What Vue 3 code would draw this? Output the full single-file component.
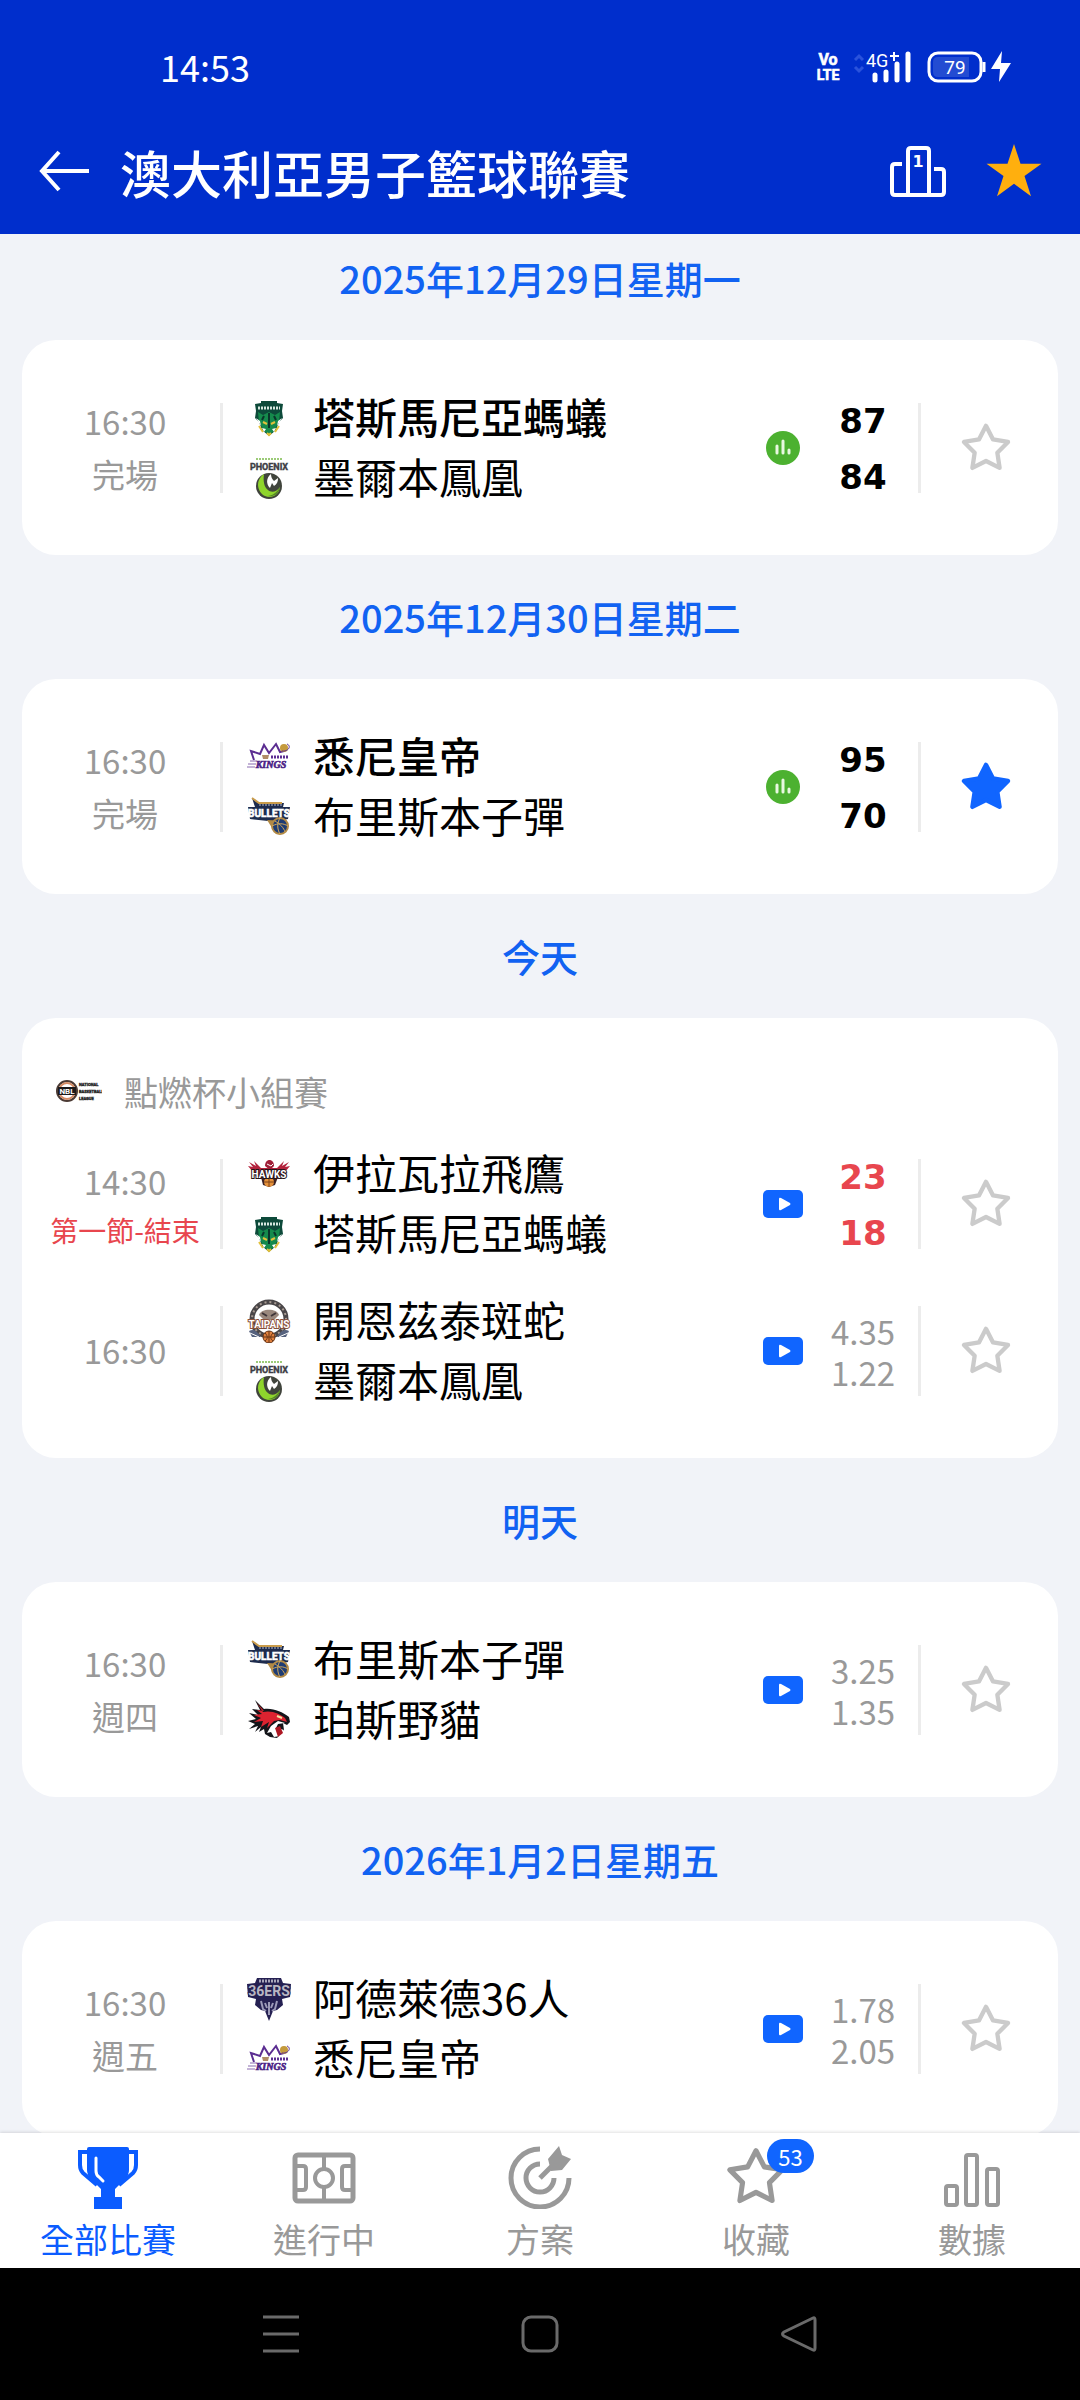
<template>
  <div class="app">
    <svg class="sprites" aria-hidden="true">
      <symbol id="logo-jackjumpers" viewBox="0 0 44 44">
        <path d="M8 8l6-1V5h16v2l6 1-1 7 1 7-4 4-3 8-7 6-7-6-3-8-4-4 1-7z" fill="#0d4a3a" />
        <path d="M11 16l5 3 6-3 6 3 5-3-1 10-5 9-5 4-5-4-5-9z" fill="#158a4c" />
        <path d="M11 12h22" stroke="#d6e8df" stroke-width="3" stroke-dasharray="2 1" />
        <path d="M9 22l4 3 1 5zM35 22l-4 3-1 5zM19 33l-2 3-2-4zM25 33l2 3 2-4z" fill="#fff" />
        <path d="M16 26l4 2M28 26l-4 2M12 30l4 6M32 30l-4 6M20 37l2 2 2-2" stroke="#e3c13b" stroke-width="2" fill="none" />
        <path d="M22 17v15M17 20l-2 4M27 20l2 4" stroke="#0a352b" stroke-width="2" />
      </symbol>
      <symbol id="logo-phoenix" viewBox="0 0 44 44">
        <path d="M9 3h26" stroke="#9ccb78" stroke-width="2" stroke-dasharray="2 1" />
        <text x="22" y="14" font-size="9" font-weight="700" font-family="Roboto, sans-serif" text-anchor="middle" fill="#3c3c44" stroke="#3c3c44" stroke-width="0.4">PHOENIX</text>
        <circle cx="22" cy="30" r="13" fill="#40443c" />
        <path d="M17 18c-9 6-7 18 1 22 7 3 14-1 15-9-3 5-9 6-12 3-4-3-5-9-4-16z" fill="#8fd52c" />
        <path d="M24 18c-5 4-5 10-1 14l2-5 2 3c3-2 4-4 4-8l-4 3c-2-2-3-4-3-7z" fill="#fff" />
        <path d="M33 31c-1 7-6 10-12 9 6-1 9-4 12-9z" fill="#55842a" />
      </symbol>
      <symbol id="logo-kings" viewBox="0 0 44 44">
        <path d="M7 25L4 16l9 3 4-9 5 8 7-9 4 8 4-1" fill="none" stroke="#5b2d91" stroke-width="2" />
        <circle cx="37" cy="13" r="4" fill="#c49a3c" />
        <path d="M35 16c6 1 10-5 5-7" fill="none" stroke="#5b2d91" />
        <path d="M15 20h7l-1 4h-5z" fill="#b08c66" />
        <path d="M24 22h17" stroke="#5b2d91" stroke-width="3" stroke-dasharray="2 1" />
        <path d="M3 26h7M1 29h8M0 32h8" stroke="#8a6ab0" />
        <text x="24" y="33" font-size="10" font-weight="700" font-family="'Liberation Serif', serif" font-style="italic" text-anchor="middle" fill="#4b1f86" stroke="#4b1f86" stroke-width="0.6">KINGS</text>
      </symbol>
      <symbol id="logo-bullets" viewBox="0 0 44 44">
        <path d="M5 3l7 5h25l-1 4h7l-2 12-10 2H21L3 24 1 12h7z" fill="#1d2b4d" />
        <path d="M5 3l7 5h23" stroke="#c99b4a" stroke-width="2" fill="none" />
        <path d="M12 10h24" stroke="#68728c" stroke-width="2" stroke-dasharray="2 1" />
        <path d="M20 25l9 14 10-13z" fill="#b28a45" />
        <circle cx="33" cy="31" r="8" fill="#1e3c73" stroke="#b28a45" stroke-width="2" />
        <path d="M25 31c6-3 11-3 16 0M33 23c-3 5-3 11 0 16M28 26c5 3 9 7 10 11" stroke="#d0a75b" fill="none" />
        <text x="22" y="22" font-size="10" font-weight="700" font-family="Roboto, sans-serif" text-anchor="middle" fill="#fff" stroke="#fff" stroke-width="0.6">BULLETS</text>
      </symbol>
      <symbol id="logo-hawks" viewBox="0 0 44 44">
        <path d="M1 14l5 1-4-5 7 4-2-5 7 7h16l7-7-2 5 7-4-4 5 5-1-5 6-4 7H11l-5-7z" fill="#b3223c" />
        <path d="M18 14c0-8 9-8 9 0l-4 4z" fill="#a01f38" />
        <path d="M20 12l4 2 2-2" stroke="#fff" fill="none" />
        <path d="M14 25h17l-3 8-6 2-6-2z" fill="#3b2125" />
        <circle cx="22" cy="30" r="5" fill="#e5913b" />
        <path d="M17 30h10M22 25v10" stroke="#7e4318" />
        <text x="22" y="26" font-size="10" font-weight="700" font-family="Roboto, sans-serif" text-anchor="middle" fill="#fff" stroke="#241418" stroke-width="2" paint-order="stroke">HAWKS</text>
      </symbol>
      <symbol id="logo-taipans" viewBox="0 0 44 44">
        <circle cx="22" cy="20" r="17" fill="#fff" stroke="#4a4648" stroke-width="5" />
        <circle cx="22" cy="20" r="17" fill="none" stroke="#a79a92" stroke-width="2" stroke-dasharray="2 3" />
        <path d="M12 16c2-7 18-7 20 0l-5 5H17z" fill="#9a887d" />
        <path d="M15 14l5 3M29 14l-5 3" stroke="#3f3538" stroke-width="2" />
        <path d="M2 32c6-3 9 2 12 6H5zM42 32c-6-3-9 2-12 6h9z" fill="#56627e" />
        <path d="M3 34l9 4M41 34l-9 4" stroke="#fff" />
        <circle cx="22" cy="38" r="6" fill="#e0803d" stroke="#663417" />
        <path d="M16 38h12M22 32v12M18 34c3 3 3 6 0 8M26 34c-3 3-3 6 0 8" stroke="#663417" fill="none" />
        <text x="22" y="29" font-size="10" font-weight="700" font-family="Roboto, sans-serif" text-anchor="middle" fill="#fff" stroke="#8a523d" stroke-width="2" paint-order="stroke">TAIPANS</text>
      </symbol>
      <symbol id="logo-wildcats" viewBox="0 0 44 44">
        <path d="M8 2l9 9c10-1 18 3 25 8l1 5-3 3-4-2 1 7-7 8-7-1-5-3-1-5-5 3 2-5-6 5 3-6-9 3 6-5-7-3 8-2-7-6 9 2-6-6 8 1z" fill="#14151a" />
        <path d="M10 5l6 9c9-2 17 2 22 6l2 4-7-2-6 1-7 7 2-6-8 5 2-6-9 1 7-4-7-3 8-1-5-4 7 1z" fill="#dc2330" />
        <path d="M38 25l-7-2-7 5-4 7 4-1 3 5 6-1 4-6-3-1-2 2-3-3 2-4z" fill="#fff" />
        <path d="M28 30l5-2 3 7-5 4z" fill="#ad1723" />
        <path d="M30 18l5 2" stroke="#f4e5a2" stroke-width="2" />
      </symbol>
      <symbol id="logo-36ers" viewBox="0 0 44 44">
        <path d="M10 1h24l2 5 8 1-1 13-8 2 1 6-6 5-4 1-4 10-4-10-4-1-6-5 1-6-8-2L0 7l8-1z" fill="#252052" />
        <path d="M14 24l2 8 3 2M30 24l-2 8-3 2M22 25v13M18 26l2 5M26 26l-2 5" stroke="#9c9ab8" stroke-width="2" fill="none" />
        <path d="M12 4h20" stroke="#a9a7bb" stroke-width="3" stroke-dasharray="2 1" />
        <text x="22" y="19" font-size="14" font-weight="700" font-family="Roboto, sans-serif" text-anchor="middle" fill="#b9b6c2" stroke="#252052" stroke-width="2" paint-order="stroke">36ERS</text>
      </symbol>
      <symbol id="icon-star" viewBox="0 0 50 50">
        <path
          d="M25 4.5L31.5 17.1L45.4 19.4L35.5 29.4L37.6 43.4L25 37L12.4 43.4L14.5 29.4L4.6 19.4L18.5 17.1Z"
          stroke="currentColor"
          stroke-width="4"
          stroke-linejoin="round"
        />
      </symbol>
    </svg>

    <header class="top">
      <div class="status-bar">
        <span class="clock">14:53</span>
        <svg class="status-icons" viewBox="0 0 200 36" role="img" aria-label="VoLTE 4G+ 79%">
          <g font-family="Roboto, sans-serif" font-weight="700" fill="#fff" stroke="#fff" stroke-width="0.6">
            <text x="16" y="17" font-size="16" text-anchor="middle">Vo</text>
            <text x="16" y="32" font-size="14" text-anchor="middle">LTE</text>
          </g>
          <path d="M43 12l4-4 4 4M43 19l4 4 4-4" fill="none" stroke="#2a52dc" stroke-width="3" />
          <text x="54" y="19" font-size="18" font-family="Roboto, sans-serif" fill="#fff">4G</text>
          <path d="M78 8h9M82 4v9" stroke="#fff" stroke-width="2" />
          <path d="M63 27v5M74 24v8M85 16v16M96 6v26" stroke="#fff" stroke-width="5" stroke-linecap="round" />
          <rect x="117" y="5" width="52" height="28" rx="9" fill="none" stroke="#fff" stroke-width="3" />
          <path d="M126 9h31v20h-31q-5 0-5-5V14q0-5 5-5z" fill="#234cd2" />
          <path d="M172 14v10" stroke="#fff" stroke-width="3" />
          <text x="143" y="26" font-size="19" text-anchor="middle" font-family="Roboto, sans-serif" fill="#fff">79</text>
          <path d="M190 3l-11 18h9l-1 13 12-19h-10z" fill="#fff" />
        </svg>
      </div>
      <div class="title-bar">
        <button class="icon-button" type="button" aria-label="返回">
          <svg class="back" viewBox="0 0 52 44">
            <path d="M21 2L4 21l17 19M4 21h47" fill="none" stroke="#fff" stroke-width="4" />
          </svg>
        </button>
        <h1 class="title">澳大利亞男子籃球聯賽</h1>
        <button class="icon-button" type="button" aria-label="排名">
          <svg class="podium" viewBox="0 0 56 52">
            <path
              d="M12 18H5q-3 0-3 3v25q0 3 3 3h46q3 0 3-3V26q0-3-3-3h-7M18 49V5q0-3 3-3h15q3 0 3 3v44"
              fill="none"
              stroke="#fff"
              stroke-width="4"
            />
            <text x="28" y="21" font-size="16" font-weight="700" font-family="'DejaVu Sans', sans-serif" text-anchor="middle" fill="#fff">1</text>
          </svg>
        </button>
        <button class="icon-button" type="button" aria-label="收藏聯賽" aria-pressed="true">
          <svg class="gold-star" viewBox="0 0 56 56">
            <path
              d="M28 0L34.5 19.8H55.5L38.5 32L45 52.2L28 39.8L11 52.2L17.5 32L0.5 19.8H21.5Z"
              fill="#ffaf0e"
            />
          </svg>
        </button>
      </div>
    </header>

    <main class="schedule">
      <section v-for="day in days" :key="day.label" class="day">
        <h2 class="day-label">{{ day.label }}</h2>
        <div class="card">
          <div v-if="day.stage" class="stage">
            <svg class="league-logo" viewBox="0 0 46 24" aria-hidden="true">
              <circle cx="11" cy="12" r="10" fill="#fff" stroke="#4b3a34" stroke-width="2" />
              <circle cx="11" cy="12" r="8" fill="none" stroke="#d58b63" stroke-width="2" />
              <path d="M2 8h18v8H2z" fill="#1c1a1b" />
              <g font-family="Roboto, sans-serif" font-weight="700">
                <text x="11" y="15" font-size="8" text-anchor="middle" fill="#fff">NBL</text>
                <g font-size="4" fill="#2b2b2b" stroke="#2b2b2b" stroke-width="0.4">
                  <text x="23" y="7">NATIONAL</text>
                  <text x="23" y="14">BASKETBALL</text>
                  <text x="23" y="21">LEAGUE</text>
                </g>
              </g>
            </svg>
            <span>{{ day.stage }}</span>
          </div>
          <article v-for="match in day.matches" :key="match.id" class="match">
            <div class="when">
              <span>{{ match.time }}</span>
              <span v-if="match.note" :class="{ live: match.live }">{{ match.note }}</span>
            </div>
            <div class="teams">
              <div v-for="team in match.teams" :key="team.name" :class="['team', { winner: team.winner }]">
                <svg class="team-logo" aria-hidden="true"><use :href="`#logo-${team.logo}`" /></svg>
                <span class="team-name">{{ team.name }}</span>
              </div>
            </div>
            <svg v-if="match.finished" class="stats-icon" viewBox="0 0 34 34" role="img" aria-label="統計">
              <circle cx="17" cy="17" r="17" fill="#4cb130" />
              <path d="M11 15v7M17 10v12M23 19v3" stroke="#e8f8e0" stroke-width="3" stroke-linecap="round" />
            </svg>
            <svg v-else class="video-icon" viewBox="0 0 40 28" role="img" aria-label="直播">
              <rect width="40" height="28" rx="5" fill="#1065ff" />
              <path d="M16 9v10q0 2 2 1l9-5q1-1 0-2l-9-5q-2-1-2 1z" fill="#fff" />
            </svg>
            <div :class="['numbers', { score: match.scored, live: match.live }]">
              <span v-for="value in match.values" :key="value">{{ value }}</span>
            </div>
            <div class="favourite-cell">
              <button
                :class="['favourite', { active: match.favourite }]"
                type="button"
                aria-label="收藏"
                :aria-pressed="match.favourite"
                @click="match.favourite = !match.favourite"
              >
                <svg><use href="#icon-star" /></svg>
              </button>
            </div>
          </article>
        </div>
      </section>
    </main>

    <nav class="tabs">
      <button
        v-for="tab in tabs"
        :key="tab.id"
        :class="['tab', { current: tab.id === currentTab }]"
        type="button"
        @click="currentTab = tab.id"
      >
        <span class="tab-icon">
          <svg v-if="tab.id === 'all'" viewBox="0 0 64 64">
            <path d="M13 7H4v13q0 5 3 8l14 12M51 7h9v13q0 5-3 8L43 40" fill="none" stroke="currentColor" stroke-width="4" />
            <path d="M13 2h38q2 0 2 2v21q0 5-4 9l-10 10v8h7v12H18V52h7v-8L15 34q-4-4-4-9V4q0-2 2-2z" fill="currentColor" />
            <path d="M20 13v13q0 4 3 6l4 4" fill="none" stroke="#fff" stroke-width="3" stroke-linecap="round" />
          </svg>
          <svg v-else-if="tab.id === 'live'" viewBox="0 0 64 64" fill="none" stroke="currentColor" stroke-width="4">
            <rect x="3" y="10" width="58" height="46" rx="3" stroke-width="5" />
            <path d="M32 10v14M32 42v14M5 21h6q3 0 3 3v18q0 3-3 3H5M59 21h-6q-3 0-3 3v18q0 3 3 3h6" />
            <circle cx="32" cy="33" r="9" />
          </svg>
          <svg v-else-if="tab.id === 'plans'" viewBox="0 0 64 64" fill="none" stroke="currentColor" stroke-width="5">
            <path d="M32 4A29 29 0 1 0 61 33M32 19A14 14 0 1 0 46 33" />
            <path d="M32 33l15-15" />
            <path d="M40 14L51 1l3 9 9 4-9 11-11 1z" fill="currentColor" stroke="none" />
          </svg>
          <svg v-else-if="tab.id === 'favourites'" class="tab-star"><use href="#icon-star" /></svg>
          <svg v-else viewBox="0 0 64 64" fill="none" stroke="currentColor" stroke-width="4">
            <rect x="6" y="41" width="11" height="19" rx="2" />
            <rect x="26" y="10" width="11" height="50" rx="2" />
            <rect x="47" y="24" width="11" height="36" rx="2" />
          </svg>
          <span v-if="tab.badge" class="badge">{{ tab.badge }}</span>
        </span>
        <span>{{ tab.label }}</span>
      </button>
    </nav>

    <div class="system-nav">
      <button type="button" aria-label="最近">
        <svg viewBox="0 0 38 38"><path d="M1 2h36M1 19h36M1 36h36" /></svg>
      </button>
      <button type="button" aria-label="主頁">
        <svg viewBox="0 0 38 38"><rect x="2" y="2" width="34" height="34" rx="8" /></svg>
      </button>
      <button type="button" aria-label="上一頁">
        <svg viewBox="0 0 38 38"><path d="M33 3L4 17q-3 2 0 4l29 14q2 1 2-2V5q0-3-2-2z" /></svg>
      </button>
    </div>
  </div>
</template>

<script setup>
import { reactive, ref } from 'vue';

const TEAMS = {
  jackjumpers: '塔斯馬尼亞螞蟻',
  phoenix: '墨爾本鳳凰',
  kings: '悉尼皇帝',
  bullets: '布里斯本子彈',
  hawks: '伊拉瓦拉飛鷹',
  taipans: '開恩茲泰斑蛇',
  wildcats: '珀斯野貓',
  '36ers': '阿德萊德36人',
};

let nextId = 1;

function match(time, note, logos, values, extra = {}) {
  return {
    id: nextId++,
    time,
    note,
    teams: logos.map((logo) => ({
      logo,
      name: TEAMS[logo],
      winner: extra.winner === logo,
    })),
    values,
    finished: Boolean(extra.winner),
    scored: Boolean(extra.winner || extra.live),
    live: Boolean(extra.live),
    favourite: Boolean(extra.favourite),
  };
}

const days = reactive([
  {
    label: '2025年12月29日星期一',
    matches: [match('16:30', '完場', ['jackjumpers', 'phoenix'], ['87', '84'], { winner: 'jackjumpers' })],
  },
  {
    label: '2025年12月30日星期二',
    matches: [match('16:30', '完場', ['kings', 'bullets'], ['95', '70'], { winner: 'kings', favourite: true })],
  },
  {
    label: '今天',
    stage: '點燃杯小組賽',
    matches: [
      match('14:30', '第一節-結束', ['hawks', 'jackjumpers'], ['23', '18'], { live: true }),
      match('16:30', '', ['taipans', 'phoenix'], ['4.35', '1.22']),
    ],
  },
  {
    label: '明天',
    matches: [match('16:30', '週四', ['bullets', 'wildcats'], ['3.25', '1.35'])],
  },
  {
    label: '2026年1月2日星期五',
    matches: [match('16:30', '週五', ['36ers', 'kings'], ['1.78', '2.05'])],
  },
]);

const currentTab = ref('all');

const tabs = [
  { id: 'all', label: '全部比賽' },
  { id: 'live', label: '進行中' },
  { id: 'plans', label: '方案' },
  { id: 'favourites', label: '收藏', badge: 53 },
  { id: 'stats', label: '數據' },
];
</script>

<style>
body {
  margin: 0;
  background: #f1f3f8;
}
</style>

<style scoped>
.app {
  display: flex;
  flex-direction: column;
  height: 100vh;
  font-family: "Noto Sans CJK TC", sans-serif;
  color: #000;
  background: #f1f3f8;
}

svg {
  display: block;
}

.sprites {
  display: none;
}

button {
  padding: 0;
  border: 0;
  background: none;
  font: inherit;
  color: inherit;
  cursor: pointer;
}

/* header */
.top {
  flex-shrink: 0;
  color: #fff;
  background: #002ecc;
}

.status-bar {
  display: flex;
  align-items: center;
  justify-content: space-between;
  height: 92px;
  padding: 20px 68px 0 160px;
}

.clock {
  font-size: 36px;
  line-height: 40px;
}

.status-icons {
  width: 200px;
  height: 36px;
}

.title-bar {
  display: flex;
  align-items: center;
  height: 120px;
  padding: 0 38px 2px;
}

.title {
  flex: 1;
  margin: 0 0 0 30px;
  font-size: 51px;
  font-weight: 500;
  line-height: 60px;
}

.back {
  width: 52px;
  height: 44px;
}

.podium {
  width: 56px;
  height: 52px;
}

.gold-star {
  width: 56px;
  height: 56px;
  margin-left: 40px;
}

/* schedule */
.schedule {
  flex: 1;
  min-height: 0;
  overflow-y: auto;
  scrollbar-width: none;
}

.day-label {
  margin: 18px 0;
  font-size: 38px;
  font-weight: 500;
  line-height: 88px;
  text-align: center;
  color: #1162f2;
}

.day:first-child .day-label {
  margin-top: 0;
}

.card {
  margin: 0 22px;
  padding: 34px 8px;
  border-radius: 34px;
  background: #fff;
}

.stage {
  display: flex;
  align-items: center;
  gap: 22px;
  height: 78px;
  padding-left: 26px;
  font-size: 34px;
  color: #999;
}

.league-logo {
  width: 46px;
  height: 24px;
}

.match {
  display: grid;
  grid-template-columns: 193px 1fr 50px 110px 132px;
  align-items: center;
  height: 147px;
}

.when {
  display: flex;
  flex-direction: column;
  justify-content: center;
  height: 90px;
  border-right: 3px solid #ececec;
  font-size: 33px;
  line-height: 53px;
  text-align: center;
  color: #999;
}

.when .live {
  font-size: 28px;
  line-height: 44px;
  color: #e8464e;
}

.teams {
  padding-left: 24px;
}

.team {
  display: flex;
  align-items: center;
  gap: 22px;
  height: 60px;
  font-size: 42px;
  line-height: 56px;
  white-space: nowrap;
}

.team-name {
  padding-bottom: 4px;
}

.team.winner {
  font-weight: 500;
}

.team-logo {
  flex-shrink: 0;
  width: 44px;
  height: 44px;
}

.stats-icon {
  width: 34px;
  height: 34px;
  justify-self: center;
}

.video-icon {
  width: 40px;
  height: 28px;
  justify-self: center;
}

.numbers {
  display: flex;
  flex-direction: column;
  padding-top: 2px;
  font-size: 33px;
  line-height: 41px;
  text-align: center;
  color: #999;
}

.numbers.score {
  font-family: "DejaVu Sans", sans-serif;
  font-size: 34px;
  font-weight: 700;
  line-height: 56px;
  color: #000;
}

.numbers.score.live {
  color: #e8464e;
}

.favourite-cell {
  display: flex;
  align-items: center;
  justify-content: center;
  height: 90px;
  border-left: 3px solid #ececec;
}

.favourite {
  color: #cbcbcb;
}

.favourite svg {
  width: 54px;
  height: 54px;
  fill: none;
}

.favourite.active {
  color: #1065ff;
}

.favourite.active svg {
  fill: currentColor;
}

/* bottom tabs */
.tabs {
  display: grid;
  grid-template-columns: repeat(5, 1fr);
  flex-shrink: 0;
  height: 135px;
  background: #fff;
  box-shadow: 0 -1px 3px rgba(0, 0, 0, 0.12);
  z-index: 1;
}

.tab {
  display: flex;
  flex-direction: column;
  align-items: center;
  gap: 8px;
  padding-top: 12px;
  font-size: 34px;
  line-height: 44px;
  color: #999;
}

.tab.current {
  color: #0b5cff;
}

.tab-icon {
  position: relative;
}

.tab-icon svg {
  width: 64px;
  height: 64px;
}

.tab-icon .tab-star {
  fill: none;
}

.badge {
  position: absolute;
  top: -6px;
  left: 43px;
  min-width: 47px;
  border-radius: 17px;
  font-size: 22px;
  line-height: 34px;
  text-align: center;
  color: #fff;
  background: #1065ff;
}

.system-nav {
  display: grid;
  grid-template-columns: repeat(3, 1fr);
  flex-shrink: 0;
  place-items: center;
  height: 132px;
  padding: 0 14%;
  background: #000;
}

.system-nav svg {
  width: 38px;
  height: 38px;
  fill: none;
  stroke: #6a6a6a;
  stroke-width: 3;
}
</style>
